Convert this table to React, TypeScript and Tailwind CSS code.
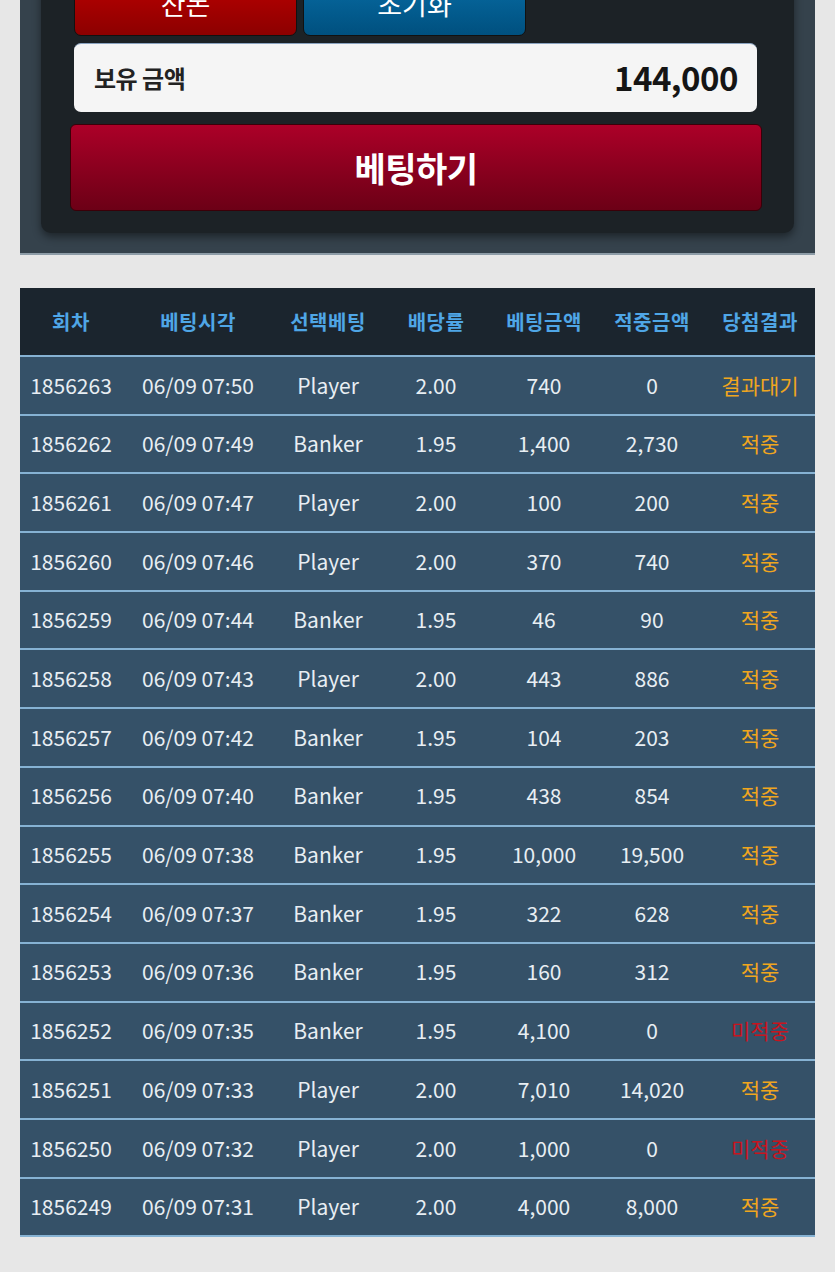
import React from "react";

type Row = {
  id: string;
  time: string;
  pick: string;
  odds: string;
  bet: string;
  win: string;
  result: string;
};

const rows: Row[] = [
  { id: "1856263", time: "06/09 07:50", pick: "Player", odds: "2.00", bet: "740", win: "0", result: "결과대기" },
  { id: "1856262", time: "06/09 07:49", pick: "Banker", odds: "1.95", bet: "1,400", win: "2,730", result: "적중" },
  { id: "1856261", time: "06/09 07:47", pick: "Player", odds: "2.00", bet: "100", win: "200", result: "적중" },
  { id: "1856260", time: "06/09 07:46", pick: "Player", odds: "2.00", bet: "370", win: "740", result: "적중" },
  { id: "1856259", time: "06/09 07:44", pick: "Banker", odds: "1.95", bet: "46", win: "90", result: "적중" },
  { id: "1856258", time: "06/09 07:43", pick: "Player", odds: "2.00", bet: "443", win: "886", result: "적중" },
  { id: "1856257", time: "06/09 07:42", pick: "Banker", odds: "1.95", bet: "104", win: "203", result: "적중" },
  { id: "1856256", time: "06/09 07:40", pick: "Banker", odds: "1.95", bet: "438", win: "854", result: "적중" },
  { id: "1856255", time: "06/09 07:38", pick: "Banker", odds: "1.95", bet: "10,000", win: "19,500", result: "적중" },
  { id: "1856254", time: "06/09 07:37", pick: "Banker", odds: "1.95", bet: "322", win: "628", result: "적중" },
  { id: "1856253", time: "06/09 07:36", pick: "Banker", odds: "1.95", bet: "160", win: "312", result: "적중" },
  { id: "1856252", time: "06/09 07:35", pick: "Banker", odds: "1.95", bet: "4,100", win: "0", result: "미적중" },
  { id: "1856251", time: "06/09 07:33", pick: "Player", odds: "2.00", bet: "7,010", win: "14,020", result: "적중" },
  { id: "1856250", time: "06/09 07:32", pick: "Player", odds: "2.00", bet: "1,000", win: "0", result: "미적중" },
  { id: "1856249", time: "06/09 07:31", pick: "Player", odds: "2.00", bet: "4,000", win: "8,000", result: "적중" },
];

const headers = ["회차", "베팅시각", "선택베팅", "배당률", "베팅금액", "적중금액", "당첨결과"];

const cols = "grid grid-cols-[102px_152px_108px_108px_108px_108px_108px]";

function resultColor(r: string) {
  if (r === "미적중") return "text-[#c8141e]";
  return "text-[#f0a61e]";
}

export default function App() {
  return (
    <div
      className="min-h-[1272px] bg-[#e7e7e7] overflow-hidden"
      style={{ fontFamily: '"Noto Sans CJK KR", "Noto Sans", sans-serif' }}
    >
      {/* top control panel (scrolled: top part cut off) */}
      <div className="mx-[20px] mt-[-40px] bg-[#35424c] border-b-2 border-[#8d9ca7] pb-[20px] px-[21px]">
        <div className="bg-[#1c2226] rounded-b-[10px] shadow-[0_4px_8px_rgba(0,0,0,0.45)] pt-[12px] pb-[22px] pl-[29px] pr-[32px] flex flex-col">
          <div className="flex gap-[6px] pl-[4px]">
            <div className="w-[223px] h-[64px] rounded-[7px] border border-[#111] bg-gradient-to-b from-[#c00000] to-[#8c0000] flex items-center justify-center text-white text-[27px]">
              잔돈
            </div>
            <div className="w-[223px] h-[64px] rounded-[7px] border border-[#111] bg-gradient-to-b from-[#0a6fa8] to-[#00507f] flex items-center justify-center text-white text-[27px]">
              초기화
            </div>
          </div>
          <div className="mt-[7px] ml-[4px] mr-[5px] h-[69px] rounded-[7px] bg-[#f5f5f5] border-t border-[#8aa3c0] flex items-center justify-between pl-[20px] pr-[19px]">
            <span className="text-[24px] font-bold text-[#222] tracking-[-0.5px]">보유 금액</span>
            <span className="text-[33px] font-bold text-[#151515] tracking-[-0.5px]">144,000</span>
          </div>
          <div className="mt-[12px] h-[87px] rounded-[6px] border border-[#3a0008] bg-gradient-to-b from-[#ac0028] to-[#6c0016] flex items-center justify-center">
            <span className="text-white text-[34px] font-bold tracking-[-0.5px]">베팅하기</span>
          </div>
        </div>
      </div>

      {/* history table */}
      <div className="mx-[20px] mt-[33px]">
        <div className={`${cols} h-[69px] bg-[#1b252e] border-b-2 border-[#86b2d3] items-center`}>
          {headers.map((h) => (
            <div key={h} className="text-center text-[20px] font-bold text-[#4fa6e6] tracking-[0.5px]">
              {h}
            </div>
          ))}
        </div>
        {rows.map((r) => (
          <div
            key={r.id}
            className={`${cols} h-[58.7px] bg-[#355168] border-b-2 border-[#86b2d3] items-center text-[21px] text-[#e8eef3]`}
          >
            <div className="text-center">{r.id}</div>
            <div className="text-center">{r.time}</div>
            <div className="text-center">{r.pick}</div>
            <div className="text-center">{r.odds}</div>
            <div className="text-center">{r.bet}</div>
            <div className="text-center">{r.win}</div>
            <div className={`text-center ${resultColor(r.result)}`}>{r.result}</div>
          </div>
        ))}
      </div>
    </div>
  );
}
